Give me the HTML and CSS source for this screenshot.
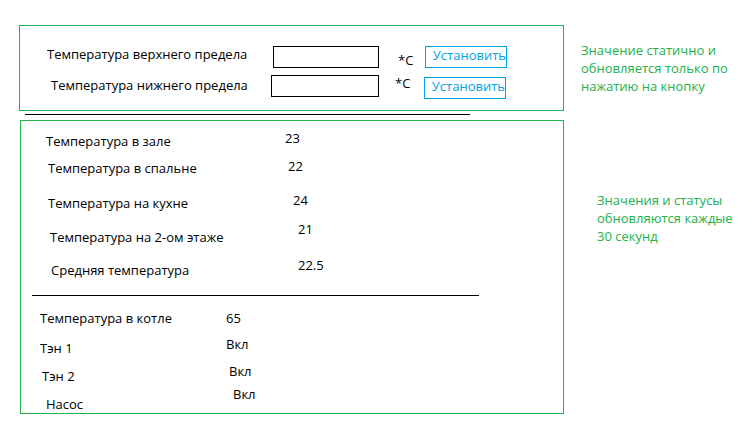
FILE: index.html
```html
<!DOCTYPE html>
<html lang="ru">
<head>
  <meta charset="UTF-8">
  <meta name="viewport" content="width=device-width, initial-scale=1.0">
  <title>Управление отоплением</title>
  <link rel="stylesheet" href="styles.css">
</head>
<body>
  <div class="page">
    <div class="main">
      <div class="panel limits">
        <div class="limit-row">
          <span class="limit-label">Температура верхнего предела</span>
          <input class="limit-input" type="text">
          <span class="unit">*С</span>
          <button class="set-btn"><span>Установить</span></button>
        </div>
        <div class="limit-row">
          <span class="limit-label">Температура нижнего предела</span>
          <input class="limit-input" type="text">
          <span class="unit">*С</span>
          <button class="set-btn"><span>Установить</span></button>
        </div>
      </div>
      <div class="rule"></div>
      <div class="panel status">
        <div class="rooms">
          <div class="row"><span class="label">Температура в зале</span><span class="value">23</span></div>
          <div class="row"><span class="label">Температура в спальне</span><span class="value">22</span></div>
          <div class="row"><span class="label">Температура на кухне</span><span class="value">24</span></div>
          <div class="row"><span class="label">Температура на 2-ом этаже</span><span class="value">21</span></div>
          <div class="row"><span class="label">Средняя температура</span><span class="value">22.5</span></div>
        </div>
        <div class="divider"></div>
        <div class="boiler">
          <div class="row"><span class="label">Температура в котле</span><span class="value">65</span></div>
          <div class="row"><span class="label">Тэн 1</span><span class="value">Вкл</span></div>
          <div class="row"><span class="label">Тэн 2</span><span class="value">Вкл</span></div>
          <div class="row"><span class="label">Насос</span><span class="value">Вкл</span></div>
        </div>
      </div>
    </div>
    <div class="notes">
      <p class="note">Значение статично и<br>обновляется только по<br>нажатию на кнопку</p>
      <p class="note note-live">Значения и статусы<br>обновляются каждые<br>30 секунд</p>
    </div>
  </div>
</body>
</html>
```

FILE: styles.css
```css
body {
  margin: 0;
  padding: 0;
  background: #fff;
  color: #000;
  font-family: 'Open Sans', 'Liberation Sans', sans-serif;
  font-size: 13px;
  line-height: 18px;
}
.page {
  display: flex;
  align-items: flex-start;
}
.main {
  width: 545px;
  margin-left: 19px;
  margin-top: 25px;
}
.panel {
  box-sizing: border-box;
  border: 1px solid #22b14c;
}

/* limits */
.limits {
  height: 86px;
  padding-top: 19px;
}
.limit-row {
  display: flex;
  align-items: flex-start;
  height: 29px;
}
.limit-label {
  width: 226px;
  margin-left: 27px;
}
.limit-input {
  box-sizing: border-box;
  width: 106px;
  height: 22px;
  margin: 1px 0 0;
  padding: 0;
  border: 1px solid #000;
  font: inherit;
}
.unit {
  box-sizing: border-box;
  width: 46px;
  padding-left: 19px;
  margin-top: 6px;
}
.set-btn {
  box-sizing: border-box;
  width: 82px;
  height: 22px;
  margin-top: 1px;
  padding: 0;
  border: 1px solid #00a2e8;
  background: #fff;
  color: #00a2e8;
  font: inherit;
  text-align: right;
  overflow: hidden;
}
.set-btn span {
  display: block;
  margin-top: -5px;
  line-height: 18px;
}
.limit-row:nth-child(2) .limit-label { width: 220px; margin-left: 31px; margin-top: 2px; }
.limit-row:nth-child(2) .limit-input { width: 108px; }
.limit-row:nth-child(2) .unit { width: 45px; padding-left: 16px; margin-top: 0; }
.limit-row:nth-child(2) .set-btn { margin-top: 3px; }

.rule {
  width: 445px;
  height: 1px;
  margin: 3px 0 5px 6px;
  background: #000;
}

/* status */
.status {
  height: 294px;
  margin-left: 1px;
  padding-top: 8px;
}
.row {
  display: flex;
  align-items: flex-start;
}
.rooms .row:nth-child(1) { height: 28px; }
.rooms .row:nth-child(2) { height: 34px; }
.rooms .row:nth-child(3) { height: 29px; }
.rooms .row:nth-child(4) { height: 36px; }
.rooms .row:nth-child(5) { height: 30px; }
.rooms .row:nth-child(1) .label { margin: 3px 0 0 25px; width: 239px; }
.rooms .row:nth-child(2) .label { margin: 2px 0 0 27px; width: 240px; }
.rooms .row:nth-child(3) .label { margin: 3px 0 0 27px; width: 245px; }
.rooms .row:nth-child(4) .label { margin: 8px 0 0 29px; width: 248px; }
.rooms .row:nth-child(5) .label { margin: 5px 0 0 30px; width: 247px; }

.divider {
  width: 447px;
  height: 1px;
  margin: 9px 0 13px 11px;
  background: #000;
}

.boiler .row:nth-child(1) { height: 26px; }
.boiler .row:nth-child(2) { height: 27px; }
.boiler .row:nth-child(3) { height: 23px; }
.boiler .row:nth-child(1) .label { margin: 0 0 0 19px; width: 186px; }
.boiler .row:nth-child(2) .label { margin: 4px 0 0 19px; width: 186px; }
.boiler .row:nth-child(3) .label { margin: 5px 0 0 21px; width: 187px; }
.boiler .row:nth-child(4) .label { margin: 10px 0 0 25px; width: 187px; }

/* notes */
.notes {
  margin-left: 17px;
  color: #22b14c;
}
.note {
  margin: 41px 0 0;
}
.note-live {
  margin: 96px 0 0 16px;
}
```
